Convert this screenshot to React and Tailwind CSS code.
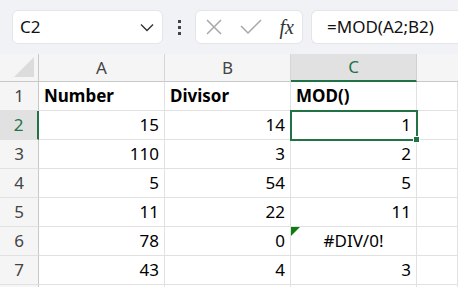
import React from "react";

const rows = [
  { n: 1, a: "Number", b: "Divisor", c: "MOD()", head: true },
  { n: 2, a: "15", b: "14", c: "1" },
  { n: 3, a: "110", b: "3", c: "2" },
  { n: 4, a: "5", b: "54", c: "5" },
  { n: 5, a: "11", b: "22", c: "11" },
  { n: 6, a: "78", b: "0", c: "#DIV/0!", err: true },
  { n: 7, a: "43", b: "4", c: "3" },
  { n: 8, a: "", b: "", c: "", hidden: true },
];

const cellFont = { fontFamily: "'Noto Sans', 'Liberation Sans', sans-serif" };

const Cell = ({ children, bold, align = "right", className = "" }) => (
  <div
    className={`relative h-[29px] border-r border-b border-[#e1e1e1] bg-white flex items-center px-[5px] text-[17px] text-black ${
      align === "right" ? "justify-end" : align === "center" ? "justify-center" : "justify-start"
    } ${bold ? "font-bold" : ""} ${className}`}
  >
    {children}
  </div>
);

export default function App() {
  return (
    <div className="w-[458px] h-[287px] overflow-hidden bg-white" style={{ fontFamily: "'Noto Sans', 'Liberation Sans', sans-serif" }}>
      {/* formula bar */}
      <div className="h-[54px] bg-[#f0f2f5] flex items-center pl-[12px] gap-[8px]">
        <div className="w-[151px] h-[34px] bg-white rounded-[6px] border border-[#e3e5e8] flex items-center justify-between pl-[7px] pr-[8px]">
          <span className="text-[17px] text-[#111]">C2</span>
          <svg width="14" height="9" viewBox="0 0 14 9" fill="none" stroke="#333" strokeWidth="1.4">
            <path d="M1 1.5 L7 7.5 L13 1.5" />
          </svg>
        </div>
        <div className="w-[16px] flex flex-col items-center gap-[3px]">
          <span className="w-[3px] h-[3px] bg-[#444]" />
          <span className="w-[3px] h-[3px] bg-[#444]" />
          <span className="w-[3px] h-[3px] bg-[#444]" />
        </div>
        <div className="w-[108px] h-[34px] bg-white rounded-[6px] border border-[#e3e5e8] flex items-center justify-between pl-[9px] pr-[8px]">
          <svg width="18" height="18" viewBox="0 0 18 18" stroke="#a8a8a8" strokeWidth="1.5">
            <path d="M2 2 L16 16 M16 2 L2 16" />
          </svg>
          <svg width="22" height="16" viewBox="0 0 22 16" fill="none" stroke="#a8a8a8" strokeWidth="1.5">
            <path d="M1 7 L8 14 L21 1" />
          </svg>
          <span className="text-[20px] italic text-[#333] leading-none" style={{ fontFamily: "'Liberation Serif', serif" }}>
            fx
          </span>
        </div>
        <div className="flex-1 h-[34px] bg-white rounded-l-[6px] border border-r-0 border-[#e3e5e8] flex items-center pl-[15px]">
          <span className="text-[17px] text-[#111]">=MOD(A2;B2)</span>
        </div>
      </div>

      {/* grid */}
      <div className="grid grid-cols-[39px_126px_126px_126px_1fr]" style={cellFont}>
        {/* column header row */}
        <div className="relative h-[28px] bg-[#f5f5f5] border-r border-b border-[#c8c8c8]">
          <div className="absolute right-[4px] bottom-[4px] w-0 h-0 border-l-[20px] border-l-transparent border-b-[20px] border-b-[#dcdcdc]" />
        </div>
        <div className="h-[28px] bg-[#f5f5f5] border-r border-b border-[#d6d6d6] border-b-[#c8c8c8] flex items-center justify-center text-[17px] text-[#444]">A</div>
        <div className="h-[28px] bg-[#f5f5f5] border-r border-b border-[#d6d6d6] border-b-[#c8c8c8] flex items-center justify-center text-[17px] text-[#444]">B</div>
        <div className="h-[28px] bg-[#e1e1e1] border-r border-[#d0d0d0] border-b-2 border-b-[#217346] flex items-center justify-center text-[17px] text-[#217346]">C</div>
        <div className="h-[28px] bg-[#f5f5f5] border-b border-[#c8c8c8]" />

        {rows.map((r) => {
          const sel = r.n === 2;
          return (
            <React.Fragment key={r.n}>
              <div
                className={`h-[29px] border-b border-[#e1e1e1] flex items-center justify-center text-[17px] ${
                  sel ? "bg-[#e1e1e1] text-[#217346] border-r-2 border-r-[#217346]" : "bg-[#f5f5f5] text-[#444] border-r border-r-[#c8c8c8]"
                }`}
              >
                {r.hidden ? "" : r.n}
              </div>
              <Cell bold={r.head} align={r.head ? "left" : "right"}>{r.a}</Cell>
              <Cell bold={r.head} align={r.head ? "left" : "right"}>{r.b}</Cell>
              <Cell
                bold={r.head}
                align={r.head ? "left" : r.err ? "center" : "right"}
                className={sel ? "z-10 outline-2 outline-[#217346] -outline-offset-1" : ""}
              >
                {r.err && (
                  <span className="absolute left-0 top-0 w-0 h-0 border-t-[9px] border-t-[#107c10] border-r-[9px] border-r-transparent" />
                )}
                {r.c}
                {sel && (
                  <span className="absolute right-[-4px] bottom-[-4px] w-[7px] h-[7px] bg-[#217346] border border-white" />
                )}
              </Cell>
              <Cell />
            </React.Fragment>
          );
        })}
      </div>
    </div>
  );
}
